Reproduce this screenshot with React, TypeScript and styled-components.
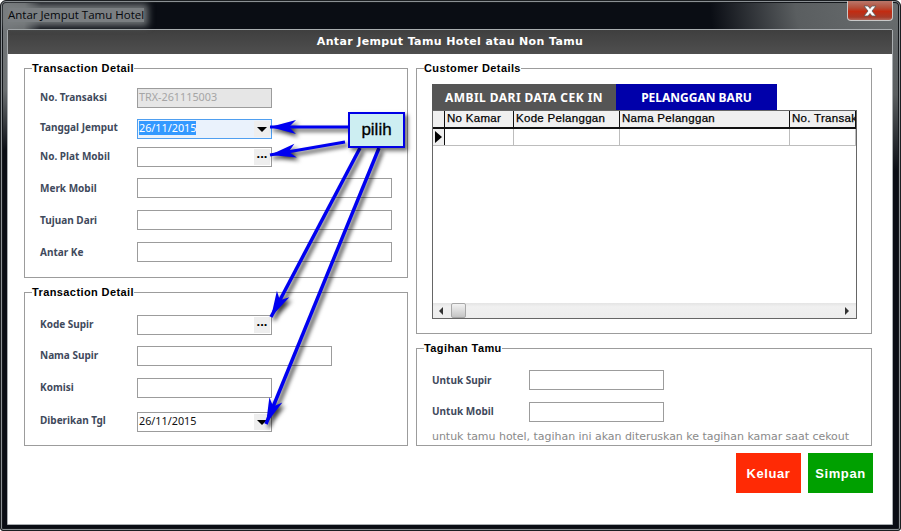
import styled, { createGlobalStyle } from "styled-components";

const GlobalStyle = createGlobalStyle`
  html, body {
    margin: 0;
    padding: 0;
    background: #fff;
  }
`;

const Frame = styled.div`
  position: relative;
  width: 901px;
  height: 531px;
  box-sizing: border-box;
  overflow: hidden;
  border-radius: 6px 6px 3px 3px;
  border: 1px solid #1c1f22;
  box-shadow: inset 0 0 0 1px #8b9094, inset 0 0 0 2px #14171b;
  background:
    radial-gradient(ellipse 40px 150px at 0 0, #777b7e 0%, #6a6e70 60%, rgba(20, 22, 26, 0) 100%),
    radial-gradient(ellipse 190px 170px at 100% 0, #6a6e70 0%, #5a5e60 55%, rgba(10, 13, 20, 0) 100%),
    #0a0d14;
`;

const TitleBar = styled.header`
  display: flex;
  align-items: flex-start;
  justify-content: space-between;
  height: 28px;
  padding: 0 7px 0 7px;
`;

const WindowTitle = styled.span`
  margin-top: 7px;
  font: 11.5px/14px "Open Sans", "Noto Sans", sans-serif;
  color: #05070c;
  background: #7b7f82;
  box-shadow: 0 0 7px 4px rgba(123, 127, 130, 0.9);
`;

const CloseButton = styled.div`
  display: flex;
  align-items: center;
  justify-content: center;
  width: 46px;
  height: 20px;
  box-sizing: border-box;
  border: 1px solid #c9c9c9;
  border-top: 0;
  border-radius: 0 0 4px 4px;
  background: linear-gradient(#b9776a 0%, #b44f3a 35%, #c22c12 55%, #a83a28 85%, #b2675a 100%);
`;

const Client = styled.main`
  width: 886px;
  height: 496px;
  margin-left: 6px;
  box-sizing: border-box;
  border: 1px solid #a9adb0;
  border-radius: 2px 2px 0 0;
  background: #fff;
`;

const Heading = styled.h1`
  height: 24px;
  margin: 0;
  background: linear-gradient(#3f3f3f, #4f4f4f);
  color: #fff;
  font: bold 11px/24px "DejaVu Sans", sans-serif;
  letter-spacing: 0.37px;
  text-align: center;
`;

const Columns = styled.div`
  display: flex;
  gap: 8px;
  padding: 7px 0 0 16px;
`;

const Column = styled.div<{ $width: number }>`
  display: flex;
  flex-direction: column;
  gap: 7px;
  width: ${({ $width }) => $width}px;
`;

const Group = styled.fieldset<{ $height: number }>`
  height: ${({ $height }) => $height}px;
  min-width: 0;
  margin: 0;
  padding: 0 15px;
  box-sizing: border-box;
  border: 1px solid #9c9c9c;
`;

const GroupTitle = styled.legend`
  margin-left: -8px;
  padding: 0;
  height: 14px;
  font: bold 11px/14px "Liberation Sans", Arial, sans-serif;
  letter-spacing: 0.4px;
  color: #000;
`;

const Row = styled.div<{ $top: number }>`
  display: flex;
  align-items: center;
  height: 20px;
  margin-top: ${({ $top }) => $top}px;
`;

const Label = styled.label<{ $lift?: number }>`
  width: 97px;
  flex: none;
  padding-bottom: ${({ $lift }) => ($lift ?? 0) * 2}px;
  font: bold 10px/14px "Noto Sans", sans-serif;
  color: #3f4a5c;
`;

const Field = styled.div<{ $width: number; $disabled?: boolean; $focused?: boolean }>`
  display: flex;
  align-items: center;
  justify-content: space-between;
  width: ${({ $width }) => $width}px;
  height: 20px;
  box-sizing: border-box;
  padding: 0 0 0 1px;
  border: 1px solid ${({ $focused }) => ($focused ? "#4f9ff0" : "#9c9c9c")};
  background: ${({ $disabled, $focused }) => ($disabled ? "#e6e6e6" : $focused ? "#eaf2fc" : "#fff")};
  color: ${({ $disabled }) => ($disabled ? "#a5a5a5" : "#111")};
  font: 10.8px/14px "Noto Sans", sans-serif;
`;

const FieldText = styled.span`
  margin-bottom: 2px;
`;

const Selected = styled(FieldText)`
  background: #3399ff;
  color: #fff;
`;

const FieldButton = styled.span`
  display: flex;
  align-items: center;
  justify-content: center;
  width: 16px;
  height: 16px;
  margin-right: 1px;
  background: #eeeeee;
  color: #000;
`;

const DotsButton = styled(FieldButton)`
  box-sizing: border-box;
  padding-bottom: 6px;
  font: bold 13px/10px "Liberation Sans", sans-serif;
`;

const Caret = styled.span`
  width: 0;
  height: 0;
  margin-top: 1px;
  border-left: 5px solid transparent;
  border-right: 5px solid transparent;
  border-top: 5px solid #000;
`;

const Tabs = styled.div`
  display: flex;
  margin-top: 9px;
  height: 26px;
`;

const Tab = styled.div<{ $width: number; $active?: boolean }>`
  width: ${({ $width }) => $width}px;
  background: ${({ $active }) => ($active ? "#0000aa" : "#555555")};
  color: #fff;
  font: bold 12px/27px "Noto Sans", sans-serif;
  letter-spacing: ${({ $active }) => ($active ? 0 : 0.45)}px;
  text-align: center;
`;

const Grid = styled.div`
  display: flex;
  flex-direction: column;
  width: 425px;
  height: 209px;
  box-sizing: border-box;
  border: 1px solid #666;
  background: #fff;
`;

const GridRow = styled.div<{ $height: number; $head?: boolean }>`
  display: flex;
  flex: none;
  height: ${({ $height }) => $height}px;
  box-sizing: border-box;
  border-bottom: ${({ $head }) => ($head ? "2px solid #111" : "1px solid #bdbdbd")};
`;

const GridCell = styled.div<{ $width: number; $head?: boolean }>`
  flex: none;
  width: ${({ $width }) => $width}px;
  box-sizing: border-box;
  overflow: hidden;
  padding-left: 2px;
  white-space: nowrap;
  border-right: 1px solid ${({ $head }) => ($head ? "#111" : "#bdbdbd")};
  background: ${({ $head }) => ($head ? "#f0f0f0" : "#fff")};
  color: #000;
  font: 11.5px/15px "Liberation Sans", Arial, sans-serif;
  letter-spacing: 0.3px;
  -webkit-text-stroke: 0.25px #000;
`;

const RowMarker = styled.div`
  display: flex;
  align-items: center;
  flex: none;
  width: 12px;
  box-sizing: border-box;
  padding-left: 2px;
  border-right: 1px solid #111;
  background: #f0f0f0;
`;

const MarkerArrow = styled.span`
  width: 0;
  height: 0;
  border-top: 6px solid transparent;
  border-bottom: 6px solid transparent;
  border-left: 7px solid #000;
`;

const GridBody = styled.div`
  flex: 1;
`;

const ScrollBar = styled.div`
  display: flex;
  align-items: center;
  justify-content: space-between;
  flex: none;
  height: 15px;
  padding: 0 7px 0 6px;
  background: linear-gradient(#e4e4e4, #f0f0f0 25%, #ededed);
`;

const ScrollThumb = styled.span`
  flex: none;
  width: 15px;
  height: 15px;
  margin-left: 8px;
  box-sizing: border-box;
  border: 1px solid #a8a8a8;
  border-radius: 2px;
  background: linear-gradient(#f2f2f2, #dcdcdc 50%, #c4c4c4);
`;

const ScrollArrow = styled.span<{ $right?: boolean }>`
  flex: none;
  width: 0;
  height: 0;
  border-top: 4px solid transparent;
  border-bottom: 4px solid transparent;
  ${({ $right }) => ($right ? "border-left: 4px solid #333;" : "border-right: 4px solid #333;")}
`;

const ScrollStart = styled.div`
  display: flex;
  align-items: center;
`;

const Note = styled.p`
  margin: 8px 0 0;
  font: 11px/14px "DejaVu Sans", sans-serif;
  letter-spacing: -0.035px;
  color: #8a8a8a;
  white-space: nowrap;
`;

const Actions = styled.div`
  display: flex;
  justify-content: flex-end;
  gap: 7px;
  width: 865px;
  margin-top: 7px;
`;

const ActionButton = styled.button<{ $color: string }>`
  width: 65px;
  height: 40px;
  padding: 0;
  border: 0;
  background: ${({ $color }) => $color};
  color: #fff;
  font: bold 13px "Liberation Sans", Arial, sans-serif;
  letter-spacing: 0.6px;
`;

const ArrowLayer = styled.svg`
  position: absolute;
  left: -1px;
  top: -1px;
  filter: drop-shadow(3px 3px 2px rgba(0, 0, 0, 0.75));
`;

const Callout = styled.div`
  position: absolute;
  left: 347px;
  top: 111px;
  width: 57px;
  height: 36px;
  box-sizing: border-box;
  border: 2px solid #0000e6;
  background: #cdeef2;
  box-shadow: 3px 3px 4px rgba(0, 0, 0, 0.55);
  color: #000;
  font: 17px/32px "Liberation Sans", Arial, sans-serif;
  -webkit-text-stroke: 0.3px #000;
  text-align: center;
`;

type Point = [number, number];

const arrows: { from: Point; to: Point; weight: number }[] = [
  { from: [350, 127], to: [270, 127], weight: 3 },
  { from: [345, 142], to: [270, 155], weight: 3 },
  { from: [360, 148], to: [271, 317], weight: 3.5 },
  { from: [379, 148], to: [266, 424], weight: 3.5 },
];

function headPoints(from: Point, to: Point) {
  const dx = from[0] - to[0];
  const dy = from[1] - to[1];
  const len = Math.hypot(dx, dy);
  const ux = dx / len;
  const uy = dy / len;
  const at = (along: number, side: number) =>
    `${to[0] + ux * along - uy * side},${to[1] + uy * along + ux * side}`;
  return [at(0, 0), at(26, 7), at(19, 0), at(26, -7)].join(" ");
}

const fieldsTop = [
  { label: "No. Transaksi", top: 13, width: 135, lift: 1, value: "TRX-261115003", disabled: true },
  { label: "Tanggal Jemput", top: 11, width: 135, lift: 2, date: true, focused: true },
  { label: "No. Plat Mobil", top: 8, width: 135, lift: 1, dots: true },
  { label: "Merk Mobil", top: 11, width: 255 },
  { label: "Tujuan Dari", top: 12, width: 255 },
  { label: "Antar Ke", top: 12, width: 255 },
];

const fieldsBottom = [
  { label: "Kode Supir", top: 16, width: 135, lift: 1, dots: true },
  { label: "Nama Supir", top: 11, width: 195, lift: 1 },
  { label: "Komisi", top: 12, width: 135, lift: 1 },
  { label: "Diberikan Tgl", top: 14, width: 135, lift: 2, date: true },
];

const columns = [
  { title: "No Kamar", width: 69 },
  { title: "Kode Pelanggan", width: 106 },
  { title: "Nama Pelanggan", width: 170 },
  { title: "No. Transaksi", width: 66 },
];

type FieldRow = {
  label: string;
  top: number;
  width: number;
  lift?: number;
  value?: string;
  disabled?: boolean;
  focused?: boolean;
  date?: boolean;
  dots?: boolean;
};

function FormRow({ row }: { row: FieldRow }) {
  const text = row.date ? "26/11/2015" : row.value;
  return (
    <Row $top={row.top}>
      <Label $lift={row.lift}>{row.label}</Label>
      <Field $width={row.width} $disabled={row.disabled} $focused={row.focused}>
        {row.focused ? <Selected>{text}</Selected> : <FieldText>{text}</FieldText>}
        {row.date && (
          <FieldButton>
            <Caret />
          </FieldButton>
        )}
        {row.dots && <DotsButton>...</DotsButton>}
      </Field>
    </Row>
  );
}

export default function App() {
  return (
    <Frame>
      <GlobalStyle />
      <TitleBar>
        <WindowTitle>Antar Jemput Tamu Hotel</WindowTitle>
        <CloseButton>
          <svg width="16" height="12" viewBox="0 0 16 12">
            <path d="M2 1h4l2 2.5L10 1h4l-4 5 4 5h-4L8 8.5 6 11H2l4-5z" fill="#fff" stroke="#5b5b5b" strokeWidth="0.8" />
          </svg>
        </CloseButton>
      </TitleBar>
      <Client>
        <Heading>Antar Jemput Tamu Hotel atau Non Tamu</Heading>
        <Columns>
          <Column $width={384}>
            <Group $height={217}>
              <GroupTitle>Transaction Detail</GroupTitle>
              {fieldsTop.map((row) => (
                <FormRow key={row.label} row={row} />
              ))}
            </Group>
            <Group $height={161}>
              <GroupTitle>Transaction Detail</GroupTitle>
              {fieldsBottom.map((row) => (
                <FormRow key={row.label} row={row} />
              ))}
            </Group>
          </Column>
          <Column $width={456}>
            <Group $height={273}>
              <GroupTitle>Customer Details</GroupTitle>
              <Tabs>
                <Tab $width={184}>AMBIL DARI DATA CEK IN</Tab>
                <Tab $width={161} $active>
                  PELANGGAN BARU
                </Tab>
              </Tabs>
              <Grid>
                <GridRow $height={18} $head>
                  <RowMarker />
                  {columns.map((col) => (
                    <GridCell key={col.title} $width={col.width} $head>
                      {col.title}
                    </GridCell>
                  ))}
                </GridRow>
                <GridRow $height={17}>
                  <RowMarker>
                    <MarkerArrow />
                  </RowMarker>
                  {columns.map((col) => (
                    <GridCell key={col.title} $width={col.width} />
                  ))}
                </GridRow>
                <GridBody />
                <ScrollBar>
                  <ScrollStart>
                    <ScrollArrow />
                    <ScrollThumb />
                  </ScrollStart>
                  <ScrollArrow $right />
                </ScrollBar>
              </Grid>
            </Group>
            <Group $height={105}>
              <GroupTitle>Tagihan Tamu</GroupTitle>
              <Row $top={15}>
                <Label>Untuk Supir</Label>
                <Field $width={135} />
              </Row>
              <Row $top={12}>
                <Label $lift={1}>Untuk Mobil</Label>
                <Field $width={135} />
              </Row>
              <Note>untuk tamu hotel, tagihan ini akan diteruskan ke tagihan kamar saat cekout</Note>
            </Group>
          </Column>
        </Columns>
        <Actions>
          <ActionButton $color="#ff2a05">Keluar</ActionButton>
          <ActionButton $color="#00a000">Simpan</ActionButton>
        </Actions>
      </Client>
      <ArrowLayer width="901" height="531" viewBox="0 0 901 531">
        {arrows.map(({ from, to, weight }) => (
          <g key={from.join()}>
            <line x1={from[0]} y1={from[1]} x2={to[0]} y2={to[1]} stroke="#0000f0" strokeWidth={weight} />
            <polygon points={headPoints(from, to)} fill="#0000f0" />
          </g>
        ))}
      </ArrowLayer>
      <Callout>pilih</Callout>
    </Frame>
  );
}
